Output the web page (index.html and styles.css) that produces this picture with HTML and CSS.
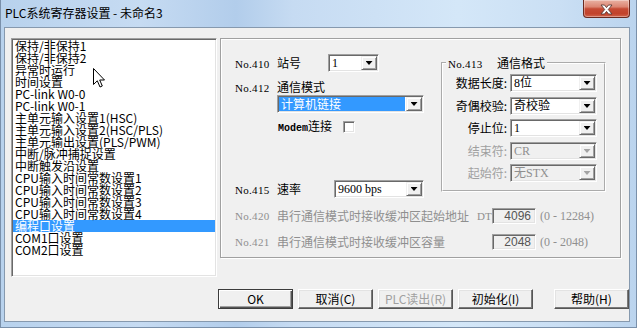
FILE: index.html
```html
<!DOCTYPE html>
<html>
<head>
<meta charset="utf-8">
<link rel="stylesheet" href="styles.css">
</head>
<body>
<div class="window">
  <div class="titlebar">
    <span class="title">PLC系统寄存器设置 - 未命名3</span>
    <div class="close">
      <svg width="13" height="11" viewBox="0 0 13 11"><path d="M1 1 L4.5 1 L6.5 3.6 L8.5 1 L12 1 L8.3 5.5 L12 10 L8.5 10 L6.5 7.4 L4.5 10 L1 10 L4.7 5.5 Z" fill="#fff" stroke="#5a3a36" stroke-width="0.9" stroke-linejoin="round"/></svg>
    </div>
  </div>
  <div class="client">
    <div class="main">
      <ul class="list">
        <li>保持/非保持1</li>
        <li>保持/非保持2</li>
        <li>异常时运行</li>
        <li>时间设置</li>
        <li>PC-link W0-0</li>
        <li>PC-link W0-1</li>
        <li>主单元输入设置1(HSC)</li>
        <li>主单元输入设置2(HSC/PLS)</li>
        <li>主单元输出设置(PLS/PWM)</li>
        <li>中断/脉冲捕捉设置</li>
        <li>中断触发沿设置</li>
        <li>CPU输入时间常数设置1</li>
        <li>CPU输入时间常数设置2</li>
        <li>CPU输入时间常数设置3</li>
        <li>CPU输入时间常数设置4</li>
        <li class="sel">编程口设置</li>
        <li>COM1口设置</li>
        <li>COM2口设置</li>
      </ul>
      <div class="group">
        <div class="top">
          <div class="left">
            <div class="r410">
              <span class="lbl w93"><span class="no">No.410</span>站号</span>
              <div class="combo w51"><span class="val">1</span><span class="arrow"></span></div>
            </div>
            <div class="r412"><span class="no">No.412</span>通信模式</div>
            <div class="combo mode"><span class="val sel">计算机链接</span><span class="arrow"></span></div>
            <div class="modem"><span class="mlbl"><span class="mono">Modem</span>连接</span><span class="check"></span></div>
            <div class="r415">
              <span class="lbl w99"><span class="no">No.415</span>速率</span>
              <div class="combo w90"><span class="val">9600 bps</span><span class="arrow"></span></div>
            </div>
          </div>
          <fieldset class="sub">
            <legend><span class="no w49">No.413</span>通信格式</legend>
            <div class="fmt">
              <span class="flbl">数据长度:</span>
              <div class="combo"><span class="val">8位</span><span class="arrow"></span></div>
              <span class="flbl">奇偶校验:</span>
              <div class="combo"><span class="val">奇校验</span><span class="arrow"></span></div>
              <span class="flbl">停止位:</span>
              <div class="combo"><span class="val">1</span><span class="arrow"></span></div>
              <span class="flbl dis">结束符:</span>
              <div class="combo off"><span class="val">CR</span><span class="arrow"></span></div>
              <span class="flbl dis">起始符:</span>
              <div class="combo off"><span class="val">无STX</span><span class="arrow"></span></div>
            </div>
          </fieldset>
        </div>
        <div class="buf">
          <span class="no">No.420</span>
          <span class="btxt">串行通信模式时接收缓冲区起始地址</span>
          <span class="dt">DT</span>
          <span class="num">4096</span>
          <span class="range">(0 - 12284)</span>
        </div>
        <div class="buf">
          <span class="no">No.421</span>
          <span class="btxt">串行通信模式时接收缓冲区容量</span>
          <span class="dt"></span>
          <span class="num">2048</span>
          <span class="range">(0 - 2048)</span>
        </div>
      </div>
    </div>
    <div class="buttons">
      <button class="btn default">OK</button>
      <button class="btn">取消(C)</button>
      <button class="btn disabled">PLC读出(R)</button>
      <button class="btn">初始化(I)</button>
      <button class="btn help">帮助(H)</button>
    </div>
  </div>
</div>
<svg class="cursor" width="13" height="21" viewBox="0 0 13 21"><path d="M0.5 0.5 L0.5 16.5 L4.3 12.8 L7 19 L9.3 18 L6.7 12 L11.5 12 Z" fill="#fff" stroke="#000" stroke-width="1" stroke-linejoin="miter"/></svg>
</body>
</html>
```
FILE: styles.css
```css
* { box-sizing: border-box; }
html, body { margin: 0; padding: 0; }
body {
  width: 637px;
  height: 328px;
  overflow: hidden;
  position: relative;
  font-family: "Noto Sans CJK SC", sans-serif;
  font-size: 12px;
  color: #000;
  background: #fff;
}
.window {
  width: 637px;
  height: 328px;
  display: flex;
  flex-direction: column;
  border: 1px solid #7a90aa;
  border-top: none;
  background: linear-gradient(90deg, #b8d2ed 0%, #c6dbf2 22%, #b2cdeb 37%, #c6dbf2 46%, #d4e7f8 72%, #cadff4 88%, #bbd4ee 100%);
}
.titlebar {
  height: 27px;
  flex: none;
  display: flex;
  justify-content: space-between;
  align-items: flex-start;
}
.title {
  padding: 4px 0 0 4px;
  line-height: 17px;
  font-size: 12px;
  color: #000;
}
.close {
  width: 47px;
  height: 18px;
  margin-right: 6px;
  border: 1px solid #6a2a20;
  border-top: none;
  border-radius: 0 0 4px 4px;
  background: linear-gradient(#e9b1a3 0%, #dc8673 40%, #c54a34 52%, #c2432c 80%, #d0644c 100%);
  box-shadow: inset 0 0 0 1px rgba(255,255,255,0.35);
  display: flex;
  align-items: center;
  justify-content: center;
  padding-top: 1px;
}
.client {
  flex: 1;
  margin: 0 6px 5px 3px;
  background: #f0f0f0;
  border: 1px solid #8699ae;
  padding: 10px 0 0 6px;
  display: flex;
  flex-direction: column;
}
.main {
  display: flex;
  align-items: flex-start;
}
.list {
  width: 206px;
  height: 239px;
  margin: 0;
  padding: 1px;
  list-style: none;
  background: #fff;
  border: 1px solid;
  border-color: #a0a0a0 #fff #fff #a0a0a0;
  box-shadow: inset 1px 1px #696969, inset -1px -1px #e3e3e3;
  overflow: hidden;
}
.list li {
  height: 12px;
  line-height: 12px;
  padding-left: 2px;
  white-space: nowrap;
}
.list li.sel {
  background: #3399ff;
  color: #fff;
}
.group {
  width: 401px;
  height: 220px;
  margin-left: 3px;
  border: 1px solid #a0a0a0;
  box-shadow: inset 1px 1px #fff, 1px 1px #fff;
  padding: 15px 0 0 14px;
}
.top {
  display: flex;
  align-items: flex-start;
  height: 144px;
}
.left { width: 206px; flex: none; }
.no {
  display: inline-block;
  width: 42px;
  font-family: "Liberation Serif", serif;
  font-size: 11px;
  letter-spacing: 0.3px;
}
.no.w49 { width: 49px; }
.mono {
  font-family: "Liberation Mono", monospace;
  font-size: 10px;
  font-weight: bold;
}
.lbl { display: inline-block; white-space: nowrap; line-height: 18px; }
.w93 { width: 93px; }
.w99 { width: 99px; }
.r410, .r415 {
  display: flex;
  align-items: center;
  height: 18px;
}
.r412 {
  margin-top: 8px;
  height: 14px;
  line-height: 14px;
}
.r415 { margin-top: 47px; }
.combo {
  display: flex;
  height: 18px;
  padding: 1px;
  background: #fff;
  border: 1px solid;
  border-color: #a0a0a0 #fff #fff #a0a0a0;
  box-shadow: inset 1px 1px #696969, inset -1px -1px #e3e3e3;
}
.w51 { width: 51px; }
.w90 { width: 90px; }
.combo.mode { width: 147px; margin: 1px 0 0 42px; }
.val {
  flex: 1;
  min-width: 0;
  padding-left: 2px;
  line-height: 14px;
  white-space: nowrap;
  font-family: "Liberation Serif", "Noto Sans CJK SC", serif;
  font-size: 12px;
}
.val.sel {
  background: #3399ff;
  color: #fff;
  font-family: "Noto Sans CJK SC", sans-serif;
  margin-right: 1px;
}
.arrow {
  width: 16px;
  flex: none;
  background: #f0f0f0;
  border: 1px solid;
  border-color: #f0f0f0 #696969 #696969 #f0f0f0;
  box-shadow: inset 1px 1px #fff, inset -1px -1px #a0a0a0;
  display: flex;
  align-items: center;
  justify-content: center;
}
.arrow::after {
  content: "";
  width: 7px;
  height: 4px;
  background: #000;
  clip-path: polygon(0 0, 100% 0, 50% 100%);
}
.combo.off { background: #f0f0f0; }
.combo.off .val { color: #8f8f8f; }
.combo.off .arrow::after { background: #a3a3a3; }
.modem {
  margin: 7px 0 0 43px;
  height: 13px;
  display: flex;
  align-items: center;
}
.mlbl {
  width: 65px;
  line-height: 13px;
  white-space: nowrap;
}
.check {
  width: 12px;
  height: 12px;
  background: #fff;
  border: 1px solid;
  border-color: #a0a0a0 #fff #fff #a0a0a0;
  box-shadow: inset 1px 1px #696969, inset -1px -1px #e3e3e3;
}
.sub {
  width: 165px;
  height: 136px;
  margin: 2px 0 0 0;
  padding: 4px 0 0 0;
  border: 2px groove #fff;
  min-width: 0;
}
.sub legend {
  margin-left: 3px;
  padding: 0 2px;
  line-height: 14px;
  height: 14px;
  white-space: nowrap;
}
.fmt {
  display: grid;
  grid-template-columns: 64px 87px;
  grid-template-rows: 23px 22px 23px 22px 18px;
  column-gap: 3px;
  align-items: start;
}
.flbl {
  text-align: right;
  line-height: 18px;
  white-space: nowrap;
}
.flbl.dis { color: #a0a0a0; }
.buf {
  display: flex;
  align-items: center;
  height: 16px;
  margin-top: 10px;
  color: #8f8f8f;
  white-space: nowrap;
}
.btxt { width: 200px; line-height: 16px; }
.dt {
  width: 15px;
  font-family: "Liberation Serif", serif;
  font-size: 11px;
}
.num {
  width: 44px;
  height: 16px;
  padding: 0 4px 0 0;
  text-align: right;
  line-height: 14px;
  color: #555;
  background: #f0f0f0;
  border: 1px solid;
  border-color: #a0a0a0 #fff #fff #a0a0a0;
  box-shadow: inset 1px 1px #696969, inset -1px -1px #e3e3e3;
  font-family: "Liberation Sans", sans-serif;
  font-size: 12px;
}
.range {
  margin-left: 4px;
  font-family: "Liberation Serif", serif;
  font-size: 12px;
}
.buttons {
  display: flex;
  gap: 5px;
  margin-top: 12px;
  padding-left: 207px;
}
.btn {
  width: 75px;
  height: 20px;
  padding: 0;
  margin: 0;
  font-family: "Noto Sans CJK SC", sans-serif;
  font-size: 12px;
  line-height: 16px;
  color: #000;
  background: #f0f0f0;
  border: 1px solid;
  border-color: #fff #555 #555 #fff;
  box-shadow: inset -1px -1px #7a7a7a, inset 1px 1px #e3e3e3;
}
.btn.default {
  border-color: #3c3c3c;
  box-shadow: inset 1px 1px #fff, inset -1px -1px #555, inset -2px -2px #a0a0a0;
}
.btn.disabled { color: #a0a0a0; }
.btn.help { margin-left: 16px; }
.cursor {
  position: absolute;
  left: 93px;
  top: 68px;
}
```
